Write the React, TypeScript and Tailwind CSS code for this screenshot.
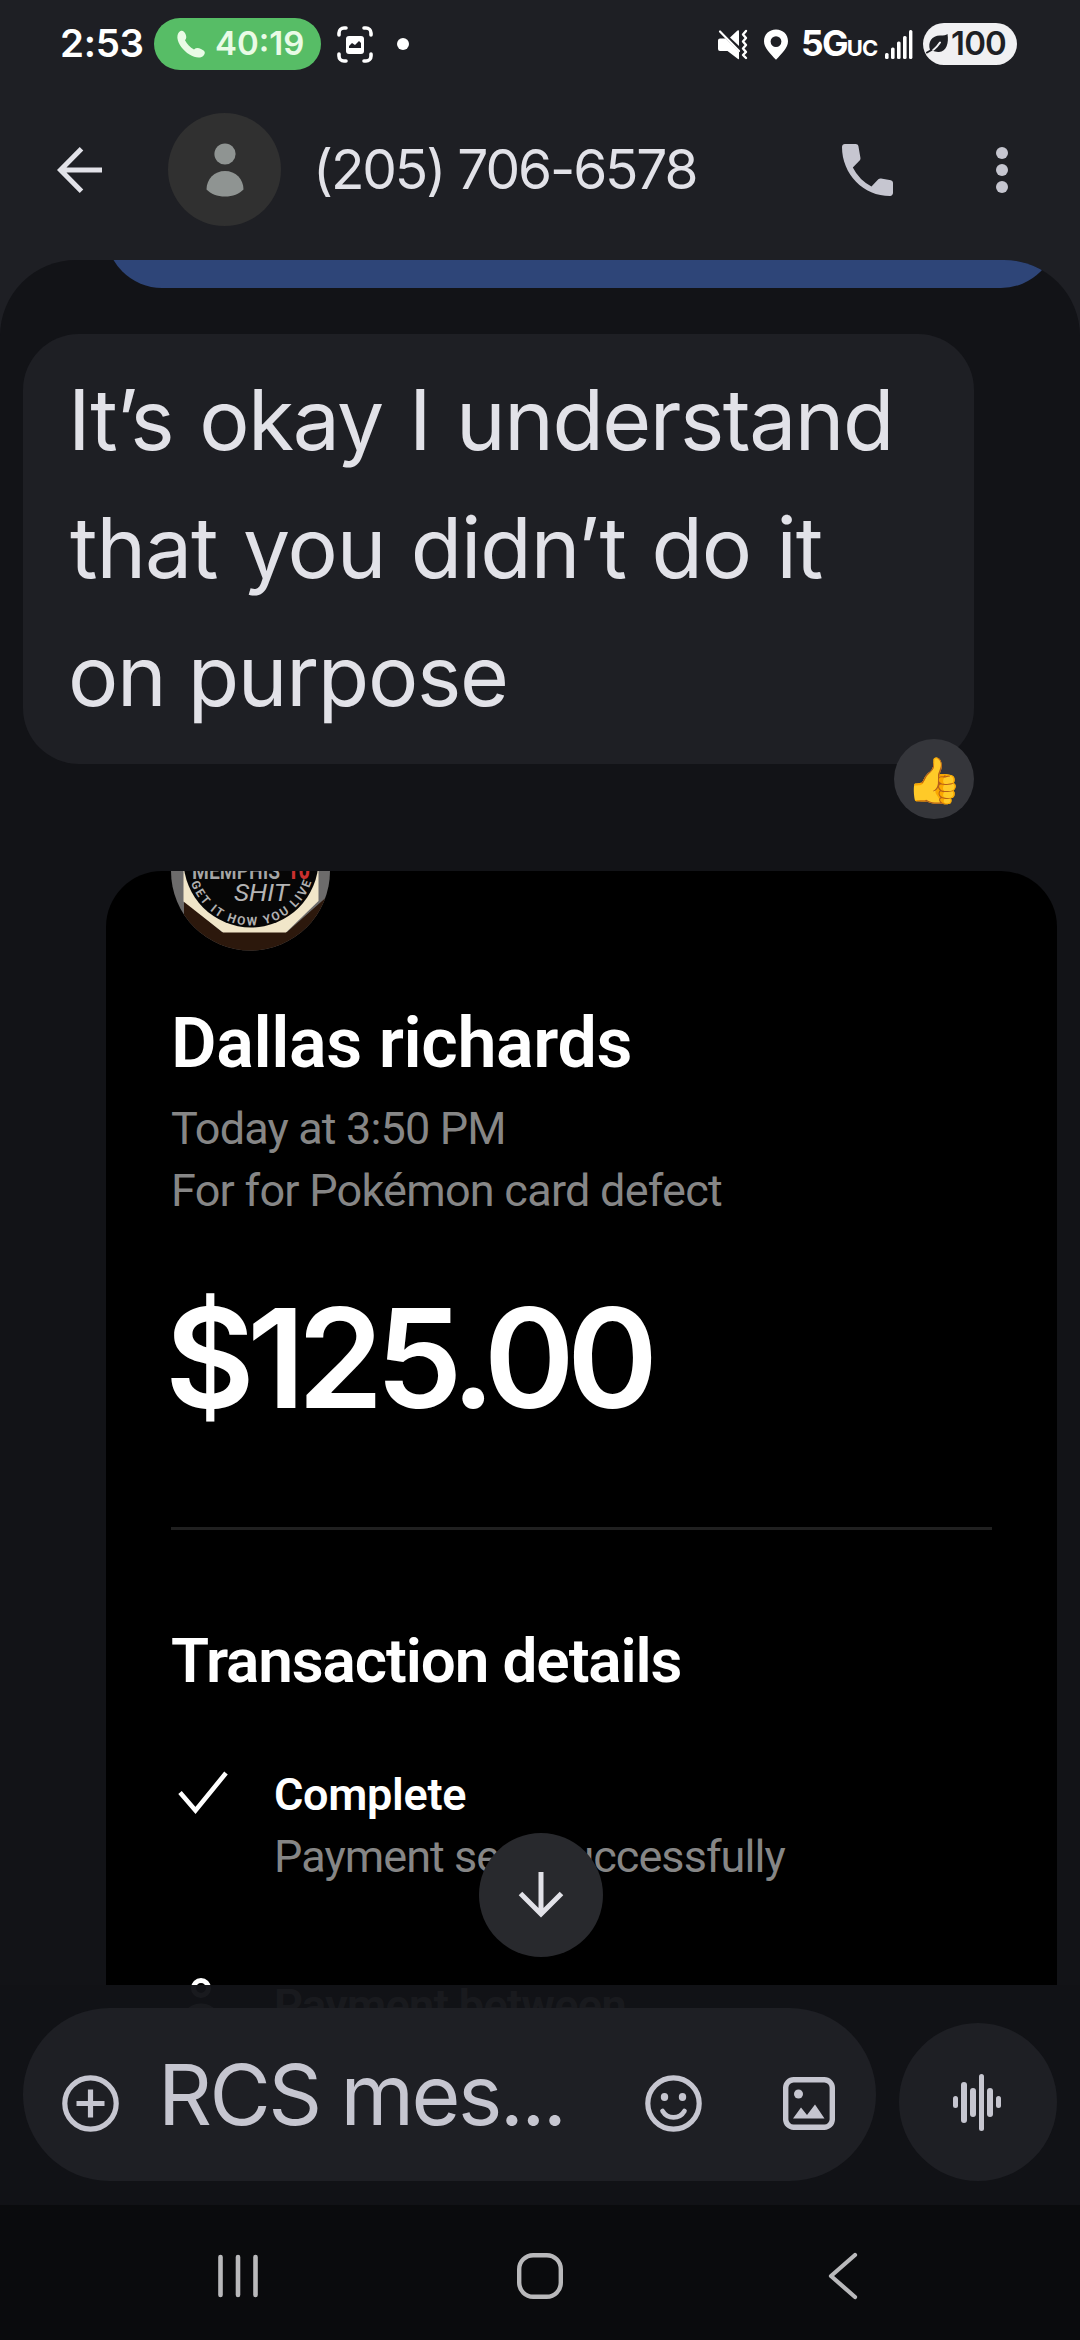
interface MessageLine {
  text: string
  className: string
}

const messageLines: MessageLine[] = [
  { text: 'It’s okay I understand', className: 'tracking-[-1.5px] [word-spacing:4px]' },
  { text: 'that you didn’t do it', className: 'ml-[2px] tracking-[-1.1px] [word-spacing:3px]' },
  { text: 'on purpose', className: 'tracking-[-1.3px]' },
]

function StatusBar() {
  return (
    <div className="flex h-[88px] shrink-0 items-center pl-[60px] pr-[63px] text-white">
      <span className="w-[94px] text-[38.5px] font-semibold tracking-[-0.3px]">2:53</span>
      <div className="flex h-[52px] w-[167px] items-center rounded-full bg-[#57bd66] pl-[23px] text-[#e9fbe6]">
        <svg width="29" height="28" viewBox="0 0 29 28" fill="currentColor">
          <path d="M3.5 1 C5.5 0 7.5 1.500 8.500 4 C9.700 7 9.500 8.500 8 10.200 C10 14 13 17.500 17 19.500 C19 17.800 21 17.600 24 19 C28 20.800 28.600 22.800 27 25 C24 29 18 27.800 12.500 24.500 C6 20.500 1 14 .4 8 C.2 4.800 1.200 2.200 3.500 1Z" />
        </svg>
        <span className="ml-[9px] text-[33px] font-semibold">40:19</span>
      </div>
      <svg className="ml-[16px]" width="36" height="37" viewBox="0 0 36 37" fill="none">
        <path
          d="M2 9V7a5 5 0 0 1 5-5h2M27 2h2a5 5 0 0 1 5 5v2M34 28v2a5 5 0 0 1-5 5h-2M9 35H7a5 5 0 0 1-5-5v-2"
          stroke="currentColor"
          strokeWidth="3.600"
          strokeLinecap="round"
        />
        <rect x="9" y="10" width="18" height="18" rx="3" fill="currentColor" />
        <path d="M12 22v-2l3-3 3 2 4-4 2 2v5Z" fill="#1e1f24" />
      </svg>
      <span className="ml-[24px] size-[12px] rounded-full bg-white" />

      <svg className="ml-auto" width="31" height="31" viewBox="0 0 31 31" fill="currentColor">
        <path d="M1 11.500q0-2 2-2h5.500L22 23v6.500q0 1-1 .4L10.500 22H3q-2 0-2-2Z" />
        <path d="M13 8.500 20.500 1.500q1.500-1 1.500.8V17Z" />
        <path d="M3 2.500 22 22" stroke="currentColor" strokeWidth="2.200" strokeLinecap="round" />
        <path
          d="m29 2-3 3.500 3 3.500-3 3.500 3 3.500-3 3.500 3 3.500-3 3 3 3"
          fill="none"
          stroke="currentColor"
          strokeWidth="2.400"
          strokeLinecap="round"
          strokeLinejoin="round"
        />
      </svg>
      <svg className="ml-[15px]" width="26" height="31" viewBox="0 0 26 31" fill="currentColor">
        <path
          fillRule="evenodd"
          d="M13 .5C6 .5 1 5.500 1 12.200 1 19 7 24 13 30.800 19 24 25 19 25 12.200 25 5.500 20 .5 13 .5Zm0 6.700a5.400 5.400 0 1 1 0 10.800 5.400 5.400 0 0 1 0-10.800Z"
        />
      </svg>
      <span className="ml-[12px] flex w-[75px] items-baseline whitespace-nowrap">
        <span className="text-[35.5px] font-bold tracking-[-1.800px]">5G</span>
        <span className="text-[22px] font-bold tracking-[-0.8px]">UC</span>
      </span>
      <svg className="ml-[9px]" width="28" height="31" viewBox="0 0 28 31" fill="currentColor">
        <rect x="0" y="24" width="3.600" height="6" rx="1.500" />
        <rect x="6" y="18.500" width="3.600" height="11.500" rx="1.500" />
        <rect x="12" y="12.500" width="3.600" height="17.500" rx="1.500" />
        <rect x="18" y="7" width="3.600" height="23" rx="1.500" />
        <rect x="24" y="1" width="3.400" height="29" rx="1.500" />
      </svg>
      <div className="ml-[10px] flex h-[42px] w-[94px] items-center rounded-full bg-[#f0f0f2] pl-[3px] text-[#1e1f24]">
        <svg width="23" height="20" viewBox="0 0 23 20">
          <path d="M4 16C1.500 8 6 1.500 14 1.500c4 0 6-.5 7.500-1.500C23 9 20.500 17.500 13 18c-3 .2-4.500-.6-6-1.200Z" fill="currentColor" />
          <path d="M1 18.500C6 18 11 13 14 8.500" fill="none" stroke="#f0f0f2" strokeWidth="2" strokeLinecap="round" />
          <path d="M1 18.500 5.500 16" stroke="currentColor" strokeWidth="2" strokeLinecap="round" />
        </svg>
        <span className="ml-[2px] text-[33px] font-semibold tracking-[-0.8px]">100</span>
      </div>
    </div>
  )
}

function Header() {
  return (
    <header className="flex h-[172px] shrink-0 items-start pl-[57px] pt-[25px]">
      <button type="button" aria-label="Back" className="mt-[34px]">
        <svg width="46" height="46" viewBox="0 0 46 46" fill="none" stroke="#e2e2e8" strokeWidth="5">
          <path d="M45 23H4M24.500 1.800 3.500 23l21 21.200" />
        </svg>
      </button>
      <div className="ml-[65px] flex size-[113px] items-center justify-center rounded-full bg-[#303030]">
        <svg width="38" height="54" viewBox="0 0 38 54" fill="#8f9492">
          <circle cx="19" cy="11" r="10.600" />
          <path d="M.5 46.500C.5 36 8.500 28 19 28s18.500 8 18.500 18.500C33 51 27 53.500 19 53.500S5 51 .5 46.500Z" />
        </svg>
      </div>
      <h1 className="ml-[32px] mt-[20px] w-[400px] whitespace-nowrap text-[55px] leading-[72px] tracking-[-2.150px] text-[#e2e2e8]">
        (205) 706-6578
      </h1>
      <button type="button" aria-label="Call" className="ml-[129px] mt-[31px]">
        <svg width="51" height="52" viewBox="3 3 18 18" preserveAspectRatio="none" fill="#c6c6d0">
          <path d="M6.540 3H4c-.55 0-1 .45-1 1 0 9.390 7.610 17 17 17 .55 0 1-.45 1-1v-3.490c0-.45-.3-.85-.73-.96l-3.500-.6c-.35-.06-.7.04-.95.290l-2.420 2.440a15.200 15.200 0 0 1-6.580-6.570l2.400-2.420c.25-.25.35-.6.28-.95l-.7-3.940C8.700 3.300 8.300 3 7.850 3Z" />
        </svg>
      </button>
      <button type="button" aria-label="More options" className="ml-[103px] mt-[34px] flex flex-col gap-[5px]">
        <span className="size-[12px] rounded-full bg-[#c6c6d0]" />
        <span className="size-[12px] rounded-full bg-[#c6c6d0]" />
        <span className="size-[12px] rounded-full bg-[#c6c6d0]" />
      </button>
    </header>
  )
}

function PayeeAvatar() {
  return (
    <svg width="159" height="80" viewBox="171 871 159 80" className="block">
      <defs>
        <clipPath id="avatar-clip">
          <circle cx="250.500" cy="871" r="79.500" />
        </clipPath>
        <path id="motto-arc" d="M187.500 862A63.500 63.500 0 0 0 314.500 862" />
      </defs>
      <g clipPath="url(#avatar-clip)">
        <rect x="171" y="871" width="159" height="80" fill="#6c6b6b" />
        <path d="M184 901 222 932h65l43-38v60H184Z" fill="#2c180c" />
        <path d="M183.500 871V901.500L223 932.500H286L318.500 901V871Z" fill="#f1e6c9" />
        <circle cx="251" cy="860" r="67.500" fill="#060606" />
        <text x="192" y="878.500" fontSize="24" fontWeight="600" fill="#a5a5a5" textLength="88" lengthAdjust="spacingAndGlyphs">
          MEMPHIS
        </text>
        <text x="287" y="878.500" fontSize="28" fontWeight="800" fill="#c9302f" textLength="23" lengthAdjust="spacingAndGlyphs">
          10
        </text>
        <text x="234" y="900.500" fontSize="23" fontStyle="italic" fill="#b4b4b4" textLength="55" lengthAdjust="spacingAndGlyphs">
          SHIT
        </text>
        <text fontSize="12" fontWeight="700" fill="#b0b0b0">
          <textPath href="#motto-arc" startOffset="21" textLength="158">
            GET IT HOW YOU LIVE
          </textPath>
        </text>
      </g>
    </svg>
  )
}

function PaymentCard() {
  return (
    <div className="ml-[106px] mt-[107px] h-[1334px] w-[951px] shrink-0 overflow-hidden rounded-t-[56px] bg-black pl-[65px] font-['Roboto',sans-serif]">
      <PayeeAvatar />
      <h2 className="mt-[52px] text-[70px] font-semibold leading-[80px] tracking-[-0.4px] text-white">Dallas richards</h2>
      <div className="mt-[15px] text-[45px] leading-[62px] text-[#868686]">
        <p className="tracking-[-0.850px]">Today at 3:50 PM</p>
        <p className="tracking-[-0.750px]">For for Pokémon card defect</p>
      </div>
      <p className="ml-[-6px] mt-[66px] font-['Inter',sans-serif] text-[138px] font-semibold leading-[140px] tracking-[-7.800px] text-white">
        $125.00
      </p>
      <div className="mt-[99px] h-[3px] w-[821px] bg-[#202020]" />
      <h3 className="mt-[91px] text-[62px] font-semibold leading-[80px] tracking-[-1.100px] text-white">Transaction details</h3>

      <div className="mt-[63px] flex">
        <svg className="ml-[7px] mt-[7px]" width="52" height="44" viewBox="0 0 52 44" fill="none" stroke="white" strokeWidth="4.600">
          <path d="M2 21.500 17.500 39.500 48 2" />
        </svg>
        <div className="ml-[44px] text-[45px] leading-[62px]">
          <p className="font-semibold tracking-[-0.3px] text-white">Complete</p>
          <p className="tracking-[-0.950px] text-[#868686]">Payment sent successfully</p>
        </div>
      </div>

      <div className="mt-[87px] flex">
        <svg className="ml-[7px] mt-[3px]" width="46" height="60" viewBox="0 0 46 60" fill="none" stroke="white" strokeWidth="5">
          <circle cx="23" cy="10" r="7.500" />
          <path d="M5 52c0-14 6-24 18-24s18 10 18 24" />
        </svg>
        <p className="ml-[50px] text-[45px] font-semibold leading-[62px] tracking-[-0.6px] text-white">Payment between</p>
      </div>
    </div>
  )
}

function Conversation() {
  return (
    <main className="relative flex h-[1945px] shrink-0 flex-col overflow-hidden rounded-t-[76px] bg-[#121317]">
      <div className="ml-[106px] flex h-[28px] w-[951px] shrink-0 items-end overflow-hidden">
        <div className="h-[112px] w-full shrink-0 rounded-[56px] bg-[#2e4578]" />
      </div>

      <div className="relative ml-[23px] mt-[46px] h-[430px] w-[951px] shrink-0 rounded-[56px] bg-[#1e1f24] pl-[45px] pt-[21.5px]">
        {messageLines.map((line) => (
          <p key={line.text} className="text-[84px] leading-[128px] text-[#e2e2e8]">
            <span className={line.className}>{line.text}</span>
          </p>
        ))}
        <div className="absolute bottom-[-55px] right-0 flex size-[80px] items-center justify-center rounded-full bg-[#35363b]">
          <span className="text-[45px] leading-none">👍</span>
        </div>
      </div>

      <PaymentCard />
      <Composer />

      <button
        type="button"
        aria-label="Scroll to latest"
        className="absolute left-[479px] top-[1573px] flex size-[124px] items-center justify-center rounded-full bg-[#28292d]"
      >
        <svg width="46" height="46" viewBox="0 0 46 46" fill="none" stroke="#e2e2e8" strokeWidth="5">
          <path d="M23 0v42M2.500 21.500 23 42l20.500-20.500" />
        </svg>
      </button>
    </main>
  )
}

function Composer() {
  return (
    <div className="absolute inset-x-0 bottom-0 flex h-[220px] items-end gap-[23px] bg-[#121317]/97 px-[23px] pb-[24px]">
      <div className="flex h-[173px] w-[853px] items-center rounded-full bg-[#1e1f24] pl-[39px] pr-[41px]">
        <svg className="mt-[17px]" width="57" height="57" viewBox="0 0 57 57" fill="none" stroke="#c6c6d0" strokeWidth="5.200">
          <circle cx="28.500" cy="28.500" r="25.700" />
          <path d="M28.500 14.500v28M14.500 28.500h28" />
        </svg>
        <span className="ml-[39px] whitespace-nowrap text-[84px] leading-[128px] tracking-[-2.600px] text-[#c6c6d0]">RCS mes...</span>
        <svg className="ml-auto mt-[17px]" width="57" height="57" viewBox="0 0 57 57" fill="none" stroke="#c6c6d0" strokeWidth="5.200">
          <circle cx="28.500" cy="28.500" r="25.700" />
          <ellipse cx="19.500" cy="22" rx="3.700" ry="4" fill="#c6c6d0" stroke="none" />
          <ellipse cx="37.500" cy="22" rx="3.700" ry="4" fill="#c6c6d0" stroke="none" />
          <path d="M17.500 36c5 8.500 17 8.500 22 0" strokeWidth="4.600" strokeLinecap="round" />
        </svg>
        <svg className="ml-[81px] mt-[17px]" width="52" height="53" viewBox="0 0 52 53" fill="none" stroke="#c6c6d0" strokeWidth="5.400">
          <rect x="2.700" y="2.700" width="46.600" height="47.600" rx="8" />
          <circle cx="15.500" cy="17" r="4.500" fill="#c6c6d0" stroke="none" />
          <path d="M10 41.500h31.500L32 27.500 24 38l-6-7.500Z" fill="#c6c6d0" stroke="none" />
        </svg>
      </div>
      <button
        type="button"
        aria-label="Record voice message"
        className="flex size-[158px] items-center justify-center gap-[3px] rounded-full bg-[#1e1f24] pr-[2px]"
      >
        <span className="h-[12px] w-[5.600px] rounded-full bg-[#c6c6d0]" />
        <span className="h-[41px] w-[5.600px] rounded-full bg-[#c6c6d0]" />
        <span className="h-[29px] w-[5.600px] rounded-full bg-[#c6c6d0]" />
        <span className="h-[57px] w-[5.600px] rounded-full bg-[#c6c6d0]" />
        <span className="h-[29px] w-[5.600px] rounded-full bg-[#c6c6d0]" />
        <span className="h-[12px] w-[5.600px] rounded-full bg-[#c6c6d0]" />
      </button>
    </div>
  )
}

function NavBar() {
  return (
    <nav className="flex h-[135px] shrink-0 items-center bg-[#0a0b0d] pl-[216px] pt-[7px]">
      <svg width="44" height="46" viewBox="0 0 44 46" stroke="#b9b9bb" strokeWidth="4.600" strokeLinecap="round">
        <path d="M4.500 4v38M22 4v38M39.500 4v38" />
      </svg>
      <svg className="ml-[257px]" width="46" height="46" viewBox="0 0 46 46" fill="none" stroke="#b9b9bb" strokeWidth="4.400">
        <rect x="2.200" y="2.200" width="41.600" height="41.600" rx="14" />
      </svg>
      <svg
        className="ml-[264px]"
        width="32"
        height="48"
        viewBox="0 0 32 48"
        fill="none"
        stroke="#b9b9bb"
        strokeWidth="4.200"
        strokeLinecap="round"
        strokeLinejoin="round"
      >
        <path d="M28 3 4 24l24 21" />
      </svg>
    </nav>
  )
}

export default function App() {
  return (
    <div className="flex h-[2340px] w-[1080px] flex-col overflow-hidden bg-[#1e1f24] font-['Inter',sans-serif]">
      <StatusBar />
      <Header />
      <Conversation />
      <NavBar />
    </div>
  )
}
